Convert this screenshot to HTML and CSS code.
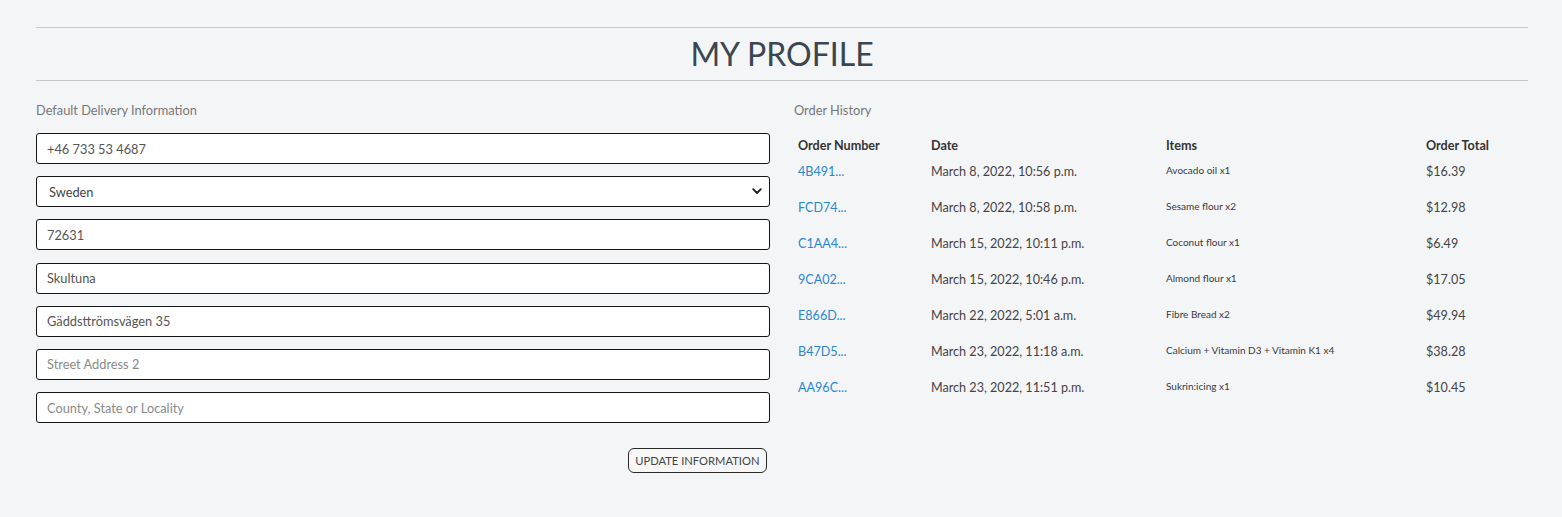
FILE: index.html
```html
<!DOCTYPE html>
<html lang="en">
<head>
<meta charset="utf-8">
<title>My Profile</title>
<link rel="stylesheet" href="styles.css">
</head>
<body>
<main class="page">
  <header class="title-bar">
    <h1 class="title">MY PROFILE</h1>
  </header>
  <div class="columns">
    <section class="col">
      <p class="section-label">Default Delivery Information</p>
      <form class="form">
        <input class="field" type="text" value="+46 733 53 4687">
        <div class="select-wrap">
          <select class="field select">
            <option>Sweden</option>
          </select>
          <svg class="chevron" width="10" height="7" viewBox="0 0 10 7"><path d="M1.2 1.2 L5 5 L8.8 1.2" fill="none" stroke="#222" stroke-width="1.9" stroke-linecap="round" stroke-linejoin="round"/></svg>
        </div>
        <input class="field" type="text" value="72631">
        <input class="field" type="text" value="Skultuna">
        <input class="field" type="text" value="Gäddsttrömsvägen 35">
        <input class="field" type="text" placeholder="Street Address 2">
        <input class="field" type="text" placeholder="County, State or Locality">
        <div class="actions">
          <button class="btn" type="button">UPDATE INFORMATION</button>
        </div>
      </form>
    </section>
    <section class="col">
      <p class="section-label">Order History</p>
      <table class="orders">
        <thead>
          <tr>
            <th class="c-num">Order Number</th>
            <th class="c-date">Date</th>
            <th class="c-items">Items</th>
            <th class="c-total">Order Total</th>
          </tr>
        </thead>
        <tbody>
          <tr><td><a class="link" href="#">4B491...</a></td><td>March 8, 2022, 10:56 p.m.</td><td class="items">Avocado oil x1</td><td>$16.39</td></tr>
          <tr><td><a class="link" href="#">FCD74...</a></td><td>March 8, 2022, 10:58 p.m.</td><td class="items">Sesame flour x2</td><td>$12.98</td></tr>
          <tr><td><a class="link" href="#">C1AA4...</a></td><td>March 15, 2022, 10:11 p.m.</td><td class="items">Coconut flour x1</td><td>$6.49</td></tr>
          <tr><td><a class="link" href="#">9CA02...</a></td><td>March 15, 2022, 10:46 p.m.</td><td class="items">Almond flour x1</td><td>$17.05</td></tr>
          <tr><td><a class="link" href="#">E866D...</a></td><td>March 22, 2022, 5:01 a.m.</td><td class="items">Fibre Bread x2</td><td>$49.94</td></tr>
          <tr><td><a class="link" href="#">B47D5...</a></td><td>March 23, 2022, 11:18 a.m.</td><td class="items">Calcium + Vitamin D3 + Vitamin K1 x4</td><td>$38.28</td></tr>
          <tr><td><a class="link" href="#">AA96C...</a></td><td>March 23, 2022, 11:51 p.m.</td><td class="items">Sukrin:icing x1</td><td>$10.45</td></tr>
        </tbody>
      </table>
    </section>
  </div>
</main>
</body>
</html>
```

FILE: styles.css
```css
html, body {
  margin: 0;
  padding: 0;
  background: #f4f5f7;
}
body {
  font-family: Lato, "Open Sans", "Liberation Sans", sans-serif;
  color: #444;
}
.page {
  padding: 27px 34px 0 36px;
}
.title-bar {
  border-top: 1px solid #c6c8ca;
  border-bottom: 1px solid #c6c8ca;
  height: 52px;
  display: flex;
  align-items: center;
  justify-content: center;
}
.title {
  margin: 0;
  font-size: 32px;
  font-weight: 400;
  line-height: 52px;
  color: #3a4650;
}
.columns {
  display: grid;
  grid-template-columns: 1fr 1fr;
  column-gap: 24px;
}
.section-label {
  margin: 20px 0 14px;
  font-size: 12.8px;
  line-height: 18px;
  color: #777;
}
.form {
  display: flex;
  flex-direction: column;
  gap: 12.2px;
}
.field {
  box-sizing: border-box;
  width: 100%;
  height: 31px;
  margin: 0;
  padding: 0 10px;
  border: 1px solid #151515;
  border-radius: 3px;
  background: #fff;
  font-family: Lato, "Open Sans", "Liberation Sans", sans-serif;
  font-size: 12.8px;
  color: #555;
  outline: none;
}
.field::placeholder {
  color: #8a8a8a;
}
.select-wrap {
  position: relative;
}
.select {
  appearance: none;
  -webkit-appearance: none;
  padding-left: 12px;
  color: #444;
}
.chevron {
  position: absolute;
  right: 8px;
  top: 12px;
  pointer-events: none;
}
.actions {
  display: flex;
  justify-content: flex-end;
  padding-right: 3px;
  margin-top: 12.4px;
}
.btn {
  box-sizing: border-box;
  height: 25px;
  padding: 0 6.5px;
  background: #f7f7f8;
  border: 1px solid #2a2a2a;
  border-radius: 6px;
  font-family: Lato, "Open Sans", "Liberation Sans", sans-serif;
  font-size: 11.2px;
  color: #444;
  cursor: pointer;
}
.orders {
  width: 100%;
  margin-top: 1px;
  border-collapse: collapse;
  table-layout: fixed;
}
.orders th,
.orders td {
  text-align: left;
  vertical-align: top;
  padding: 4px 4px;
  line-height: 18px;
  font-size: 12.6px;
}
.orders th {
  font-weight: 700;
  color: #333;
}
.orders td {
  padding-bottom: 14px;
  color: #444;
}
.c-num { width: 125px; }
.c-date { width: 227px; }
.c-items { width: 252px; }
.orders td.items {
  font-size: 10px;
  line-height: 14px;
  color: #3a3a3a;
}
.link {
  color: #2a87d4;
  text-decoration: none;
}
```
